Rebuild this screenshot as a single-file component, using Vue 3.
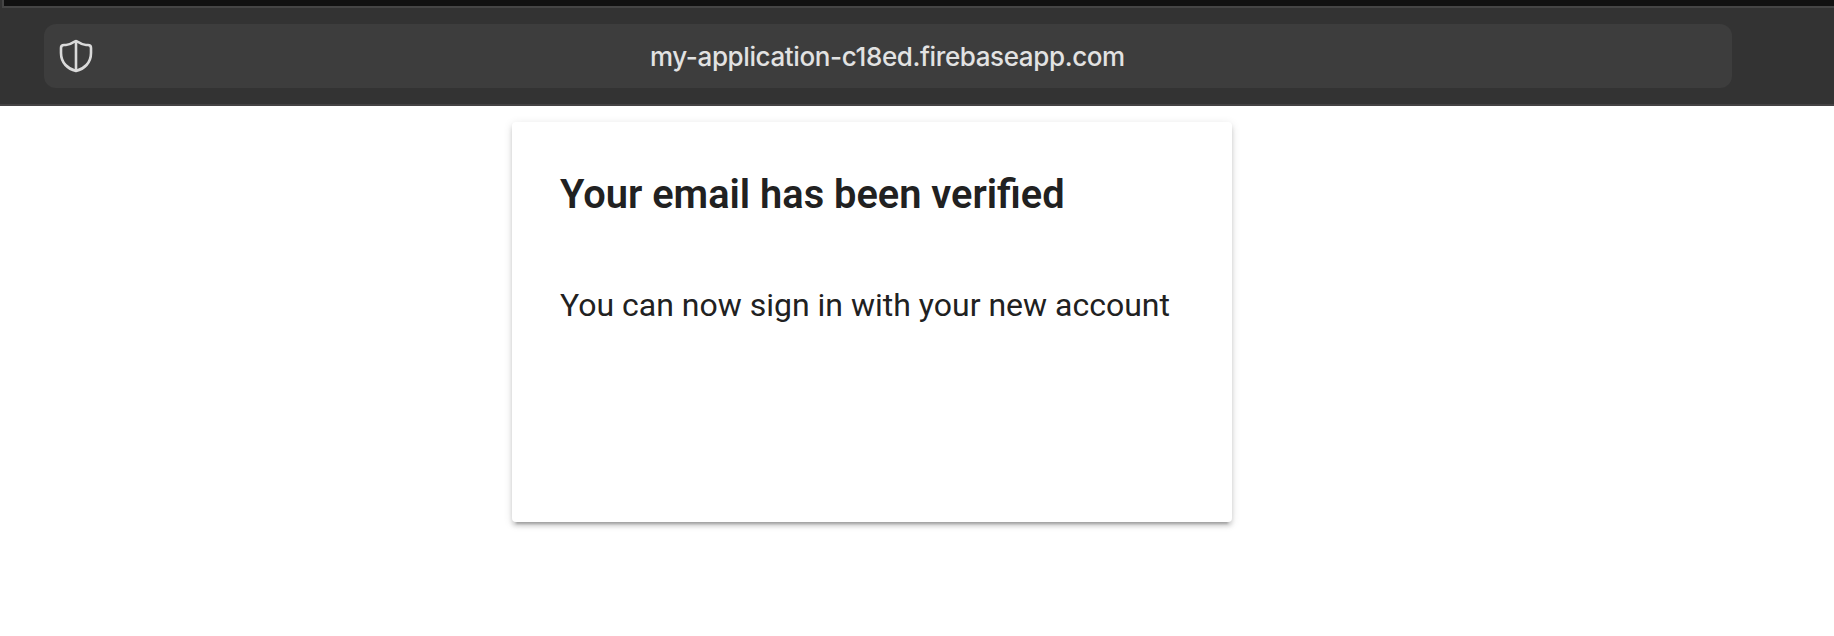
<script setup>
const host = 'my-application-c18ed.firebaseapp.com'
</script>

<template>
  <div class="window">
    <header class="toolbar">
      <div class="tab-strip"></div>
      <div class="address-bar">
        <svg class="shield" viewBox="0 0 36 36" width="36" height="36" aria-hidden="true">
          <path d="M18 3C15.7 3 14 7 8 7H6Q3 7 3 10V15C3 25 10 31 18 33C26 31 33 25 33 15V10Q33 7 30 7H28C22 7 20.3 3 18 3ZM18 3V33" />
        </svg>
        <span class="host">{{ host }}</span>
      </div>
    </header>
    <main class="page">
      <section class="card">
        <h1>Your email has been verified</h1>
        <p>You can now sign in with your new account</p>
      </section>
    </main>
  </div>
</template>

<style>
body {
  margin: 0;
  background: #fff;
}
</style>

<style scoped>
.window {
  height: 636px;
  overflow: hidden;
  background: #fff;
}
.toolbar {
  box-sizing: border-box;
  height: 106px;
  background: #333;
  border-bottom: 2px solid #454344;
}
.tab-strip {
  height: 6px;
  margin-left: 2px;
  background: #111;
  border-left: 2px solid #454545;
  border-bottom: 2px solid #454545;
}
.address-bar {
  box-sizing: border-box;
  display: flex;
  align-items: center;
  width: 1688px;
  height: 64px;
  margin: 16px 0 0 44px;
  padding-left: 14px;
  border-radius: 12px;
  background: #3d3d3d;
}
.shield {
  flex: none;
  fill: none;
  stroke: #dadada;
  stroke-width: 2.6;
  stroke-linejoin: round;
}
.host {
  margin-left: 556px;
  padding-top: 2px;
  color: #e2e2e2;
  font: 500 26px/32px Inter, sans-serif;
  letter-spacing: -0.38px;
  white-space: nowrap;
}
.page {
  padding: 16px 0 0 512px;
}
.card {
  box-sizing: border-box;
  width: 720px;
  height: 400px;
  padding: 49px 48px 0;
  border-radius: 4px;
  background: #fff;
  box-shadow: 0 4px 4px 0 rgba(0, 0, 0, 0.14), 0 6px 2px -4px rgba(0, 0, 0, 0.2), 0 2px 10px 0 rgba(0, 0, 0, 0.12);
  color: #212121;
  font-family: Roboto, sans-serif;
}
h1 {
  margin: 0;
  font-size: 39.8px;
  font-weight: 600;
  line-height: 48px;
  white-space: nowrap;
}
p {
  margin: 62px 0 0;
  font-size: 32px;
  line-height: 48px;
  white-space: nowrap;
}
</style>
